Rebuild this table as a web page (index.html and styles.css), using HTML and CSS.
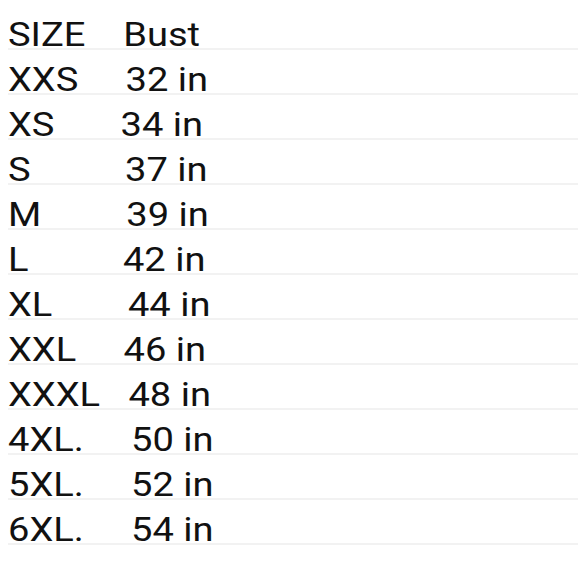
FILE: index.html
```html
<!DOCTYPE html>
<html>
<head>
<meta charset="utf-8">
<link rel="stylesheet" href="styles.css">
</head>
<body>
<div class="note">
<div class="row"><span class="txt">SIZE    Bust</span></div>
<div class="row"><span class="txt">XXS     32 in</span></div>
<div class="row"><span class="txt">XS       34 in</span></div>
<div class="row"><span class="txt">S          37 in</span></div>
<div class="row"><span class="txt">M         39 in</span></div>
<div class="row"><span class="txt">L          42 in</span></div>
<div class="row"><span class="txt">XL        44 in</span></div>
<div class="row"><span class="txt">XXL     46 in</span></div>
<div class="row"><span class="txt">XXXL   48 in</span></div>
<div class="row"><span class="txt">4XL.     50 in</span></div>
<div class="row"><span class="txt">5XL.     52 in</span></div>
<div class="row"><span class="txt">6XL.     54 in</span></div>
</div>
</body>
</html>
```
FILE: styles.css
```css
html, body {
  margin: 0;
  padding: 0;
  background: #ffffff;
}
body {
  font-family: Roboto, "Liberation Sans", sans-serif;
  color: #111111;
}
.note {
  margin-left: 8px;
  padding-top: 5px;
}
.row {
  height: 27px;
  padding-top: 16px;
  line-height: 27px;
  font-size: 34px;
  border-bottom: 2px solid #f2f2f2;
  white-space: pre;
}
.txt {
  display: inline-block;
  transform: scaleX(1.12);
  transform-origin: left center;
}
```
